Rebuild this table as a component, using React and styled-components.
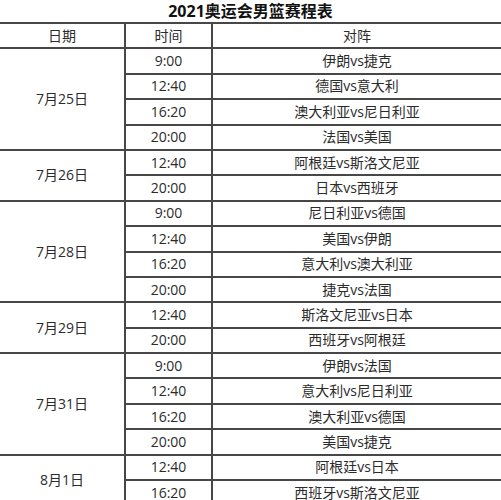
import React from "react";
import styled, { createGlobalStyle } from "styled-components";

const GlobalStyle = createGlobalStyle`
	html, body {
		margin: 0;
		padding: 0;
		background: #fff;
	}
	body {
		font-family: "Open Sans", "Noto Sans CJK SC", sans-serif;
		color: #2b2b2b;
	}
`;

const Page = styled.main`
	width: 501px;
	overflow: hidden;
`;

const Title = styled.h1`
	margin: 0;
	height: 22px;
	line-height: 22px;
	font-size: 16px;
	font-weight: 700;
	text-align: center;
	color: #111;
`;

const Col = styled.col`
	width: ${({ width }) => (width ? `${width}px` : "auto")};
`;

const Table = styled.table`
	width: 501px;
	border-collapse: collapse;
	table-layout: fixed;
	font-size: 14px;
	tr {
		height: 25.4px;
	}
	th,
	td {
		border: 2px solid #474747;
		padding: 0;
		text-align: center;
		vertical-align: middle;
		font-weight: 400;
		line-height: 20px;
	}
	th:first-child,
	td.date {
		border-left: none;
	}
	th:last-child,
	td:last-child {
		border-right: none;
	}
`;

const schedule = [
	{
		date: "7月25日",
		games: [
			["9:00", "伊朗vs捷克"],
			["12:40", "德国vs意大利"],
			["16:20", "澳大利亚vs尼日利亚"],
			["20:00", "法国vs美国"],
		],
	},
	{
		date: "7月26日",
		games: [
			["12:40", "阿根廷vs斯洛文尼亚"],
			["20:00", "日本vs西班牙"],
		],
	},
	{
		date: "7月28日",
		games: [
			["9:00", "尼日利亚vs德国"],
			["12:40", "美国vs伊朗"],
			["16:20", "意大利vs澳大利亚"],
			["20:00", "捷克vs法国"],
		],
	},
	{
		date: "7月29日",
		games: [
			["12:40", "斯洛文尼亚vs日本"],
			["20:00", "西班牙vs阿根廷"],
		],
	},
	{
		date: "7月31日",
		games: [
			["9:00", "伊朗vs法国"],
			["12:40", "意大利vs尼日利亚"],
			["16:20", "澳大利亚vs德国"],
			["20:00", "美国vs捷克"],
		],
	},
	{
		date: "8月1日",
		games: [
			["12:40", "阿根廷vs日本"],
			["16:20", "西班牙vs斯洛文尼亚"],
		],
	},
];

const App = () => {
	return (
		<>
			<GlobalStyle />
			<Page>
				<Title>2021奥运会男篮赛程表</Title>
				<Table>
					<colgroup>
						<Col width={125} />
						<Col width={87} />
						<Col />
					</colgroup>
					<thead>
						<tr>
							<th>日期</th>
							<th>时间</th>
							<th>对阵</th>
						</tr>
					</thead>
					<tbody>
						{schedule.map((day) =>
							day.games.map(([time, match], i) => (
								<tr key={day.date + time}>
									{i === 0 && (
										<td className="date" rowSpan={day.games.length}>
											{day.date}
										</td>
									)}
									<td>{time}</td>
									<td>{match}</td>
								</tr>
							))
						)}
					</tbody>
				</Table>
			</Page>
		</>
	);
};

export default App;
